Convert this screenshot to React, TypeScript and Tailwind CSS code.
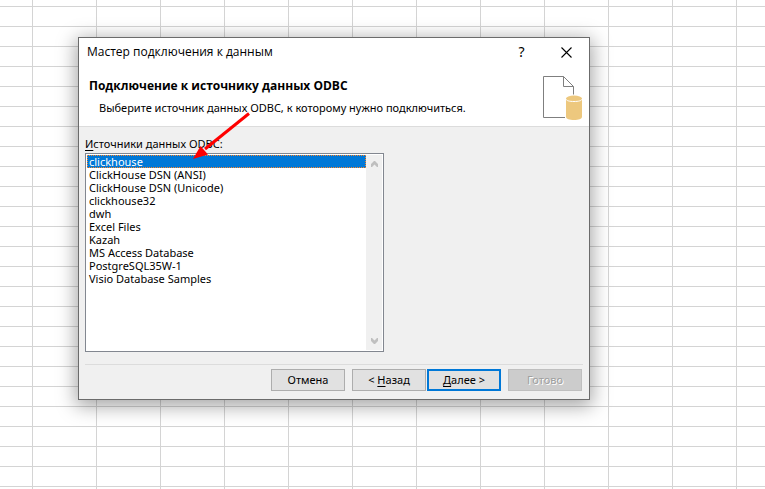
import { useState } from "react";

const SOURCES = [
  "clickhouse",
  "ClickHouse DSN (ANSI)",
  "ClickHouse DSN (Unicode)",
  "clickhouse32",
  "dwh",
  "Excel Files",
  "Kazah",
  "MS Access Database",
  "PostgreSQL35W-1",
  "Visio Database Samples",
];

const BUTTON =
  "h-[22px] w-[74px] bg-[#e1e1e1] pb-0.5 text-center focus-visible:outline-1 focus-visible:outline-dotted";

function DatabaseFileIcon() {
  return (
    <svg width="40" height="45" viewBox="0 0 40 45" fill="none" aria-hidden="true">
      <path d="M22 41.500H.5V.5h20l10 10v8M20.500.5v10h10" stroke="#7f7f7f" />
      <path d="M23 22.500v18.500c0 1.700 3.600 3 8 3s8-1.300 8-3V22.500z" fill="#edc87e" />
      <ellipse cx="31" cy="22.500" rx="8" ry="3" fill="#edc87e" />
      <path d="M23 23c0 1.700 3.600 2.500 8 2.500s8-.8 8-2.500" stroke="#fff" />
    </svg>
  );
}

function Chevron({ down = false }: { down?: boolean }) {
  return (
    <svg
      width="7"
      height="6"
      viewBox="0 0 7 6"
      aria-hidden="true"
      className={down ? "rotate-180" : undefined}
    >
      <path d="M0 3 3 0h1l3 3v3H6L3.500 3.500 1 6H0z" fill="#bfbfbf" />
    </svg>
  );
}

export default function App() {
  const [source, setSource] = useState("clickhouse");

  return (
    <main className="min-h-screen bg-white bg-[linear-gradient(to_right,#d4d4d4_1px,transparent_1px),linear-gradient(to_bottom,#d4d4d4_1px,transparent_1px)] bg-[size:64px_20px] bg-[position:32px_6px] px-[78px] pt-[37px] font-['Noto_Sans',sans-serif] text-[11px] leading-[13px] text-black">
      <div
        role="dialog"
        aria-labelledby="wizard-title"
        className="relative max-w-[512px] border border-[#6b6b6b] bg-[#f0f0f0] shadow-[0_4px_18px_2px_rgba(0,0,0,0.36)]"
      >
        <header className="flex h-[89px] flex-col border-b border-[#dcdcdc] bg-white">
          <div className="flex h-7 items-center justify-between pl-2">
            <h1 id="wizard-title" className="font-['Open_Sans',sans-serif] text-xs">
              Мастер подключения к данным
            </h1>
            <div className="flex h-full">
              <button aria-label="Справка" className="w-[45px] text-sm">
                ?
              </button>
              <button aria-label="Закрыть" className="flex w-[45px] items-center justify-center">
                <svg width="11" height="11" viewBox="0 0 11 11" aria-hidden="true">
                  <path d="M.5.5l10 10M10.500.5l-10 10" stroke="#000" strokeWidth="1.100" />
                </svg>
              </button>
            </div>
          </div>
          <div className="flex flex-1 items-start justify-between pr-1.5 pl-2.5">
            <div className="pt-3">
              <h2 className="font-['Open_Sans',sans-serif] text-xs leading-4 font-bold">
                Подключение к источнику данных ODBC
              </h2>
              <p className="pt-[7px] pl-2.5">
                Выберите источник данных ODBC, к которому нужно подключиться.
              </p>
            </div>
            <div className="pt-2.5">
              <DatabaseFileIcon />
            </div>
          </div>
        </header>

        <section className="px-1.5 pt-2.5">
          <label htmlFor="sources" className="block h-4 leading-[14px]">
            <u className="underline-offset-2">И</u>сточники данных ODBC:
          </label>
          <div className="flex h-[199px] max-w-[299px] border border-[#828790] bg-white p-px">
            <select
              id="sources"
              size={15}
              value={source}
              onChange={(e) => setSource(e.target.value)}
              className="h-full min-w-0 flex-1 appearance-none overflow-hidden outline-none"
            >
              {SOURCES.map((s) => (
                <option
                  key={s}
                  value={s}
                  className="flex h-[13px] min-h-0 items-center border border-transparent px-px py-0 checked:border-dotted checked:border-[#ff8728] checked:bg-[#0078d7] checked:bg-[linear-gradient(#0078d7,#0078d7)] checked:[-webkit-text-fill-color:white]"
                >
                  {s}
                </option>
              ))}
            </select>
            <div className="flex w-4 flex-col items-center justify-between bg-[#f0f0f0] py-1.5">
              <Chevron />
              <Chevron down />
            </div>
          </div>
        </section>

        <footer className="px-1.5 pt-3 pb-2">
          <div className="flex justify-end border-t border-[#dcdcdc] pt-1 pr-px">
            <button className={`${BUTTON} mr-[7px] border border-[#adadad]`}>Отмена</button>
            <button className={`${BUTTON} mr-px border border-[#adadad]`}>
              &lt; <u className="underline-offset-2">Н</u>азад
            </button>
            <button className={`${BUTTON} mr-[7px] border-2 border-[#0078d7]`}>
              <u className="underline-offset-2">Д</u>алее &gt;
            </button>
            <button
              disabled
              className="h-[22px] w-[74px] border border-[#bfbfbf] bg-[#cccccc] pb-0.5 text-[#a0a0a0] [text-shadow:1px_1px_0_white]"
            >
              Готово
            </button>
          </div>
        </footer>

        {/* pointer to the selected source */}
        <svg
          className="pointer-events-none absolute top-[74px] left-[114px]"
          width="60"
          height="50"
          viewBox="0 0 60 50"
          aria-hidden="true"
        >
          <path d="M56 1.500 12 37" stroke="#f00" strokeWidth="3" />
          <path d="M0 47 7.500 34 15 42.500z" fill="#f00" />
        </svg>
      </div>
    </main>
  );
}
